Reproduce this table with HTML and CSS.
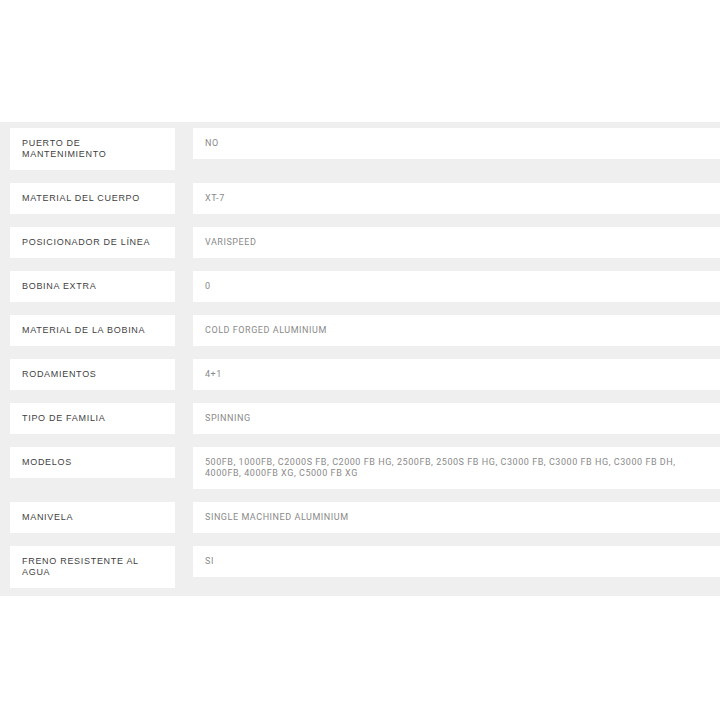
FILE: index.html
```html
<!DOCTYPE html>
<html lang="es">
<head>
<meta charset="utf-8">
<title>Especificaciones</title>
<link rel="stylesheet" href="styles.css">
</head>
<body>
<div class="top-space"></div>
<section class="specs">
  <div class="spec-grid">
    <div class="label">PUERTO DE MANTENIMIENTO</div><div class="value">NO</div>
    <div class="label">MATERIAL DEL CUERPO</div><div class="value">XT-7</div>
    <div class="label">POSICIONADOR DE LÍNEA</div><div class="value">VARISPEED</div>
    <div class="label">BOBINA EXTRA</div><div class="value">0</div>
    <div class="label">MATERIAL DE LA BOBINA</div><div class="value">COLD FORGED ALUMINIUM</div>
    <div class="label">RODAMIENTOS</div><div class="value">4+1</div>
    <div class="label">TIPO DE FAMILIA</div><div class="value">SPINNING</div>
    <div class="label">MODELOS</div><div class="value">500FB, 1000FB, C2000S FB, C2000 FB HG, 2500FB, 2500S FB HG, C3000 FB, C3000 FB HG, C3000 FB DH, 4000FB, 4000FB XG, C5000 FB XG</div>
    <div class="label">MANIVELA</div><div class="value">SINGLE MACHINED ALUMINIUM</div>
    <div class="label">FRENO RESISTENTE AL AGUA</div><div class="value">SI</div>
  </div>
</section>
</body>
</html>
```
FILE: styles.css
```css
html, body {
  margin: 0;
  padding: 0;
  background: #ffffff;
}
.top-space {
  height: 122px;
}
.specs {
  background: #efefef;
  padding: 6px 0 8px 10px;
}
.spec-grid {
  display: grid;
  grid-template-columns: 165px 1fr;
  column-gap: 18px;
  row-gap: 13px;
  align-items: start;
}
.label {
  background: #ffffff;
  padding: 10px 12px;
  font-family: "Liberation Sans", Arial, sans-serif;
  font-size: 9px;
  line-height: 11px;
  letter-spacing: 0.7px;
  color: #3f3f3f;
}
.value {
  background: #ffffff;
  padding: 10px 12px;
  font-family: Roboto, "Liberation Sans", sans-serif;
  font-size: 9px;
  line-height: 11px;
  letter-spacing: 0.55px;
  color: #8a8a8a;
}
```
